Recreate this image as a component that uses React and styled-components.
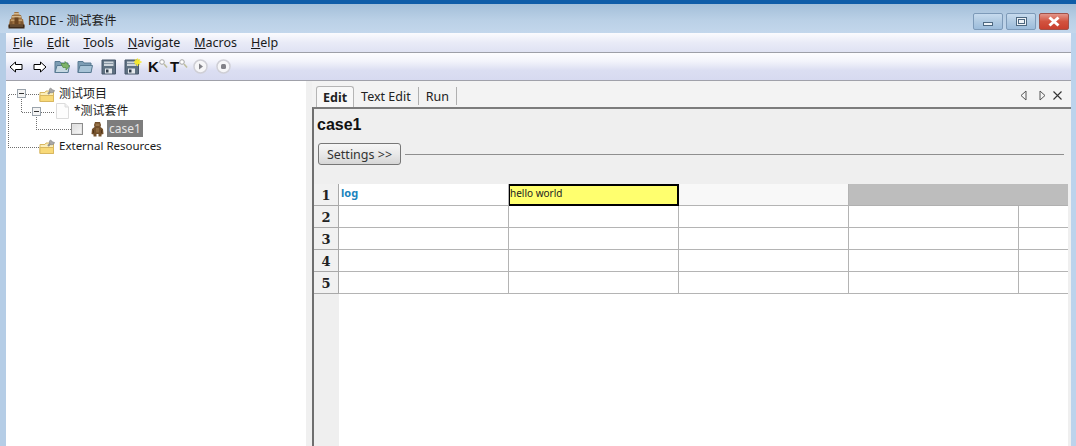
import styled, { createGlobalStyle } from "styled-components";

const uiFont = `"Noto Sans", "Noto Sans CJK SC", sans-serif`;

const GlobalStyle = createGlobalStyle`
  html, body {
    margin: 0;
    padding: 0;
    background: #b8d1ec;
  }
  * {
    box-sizing: border-box;
  }
`;

const menus = ["File", "Edit", "Tools", "Navigate", "Macros", "Help"];
const tabs = ["Edit", "Text Edit", "Run"];
const rows = [1, 2, 3, 4, 5];

function AppLogo() {
  return (
    <svg width="17" height="18" viewBox="0 0 17 18">
      <path d="M6.500 1 H10.500 L11.500 4 H13 L14 8 H15 L16.500 16 H.5 L2 8 H3 L4 4 H5.500 Z" fill="#9b7040" />
      <path d="M6 2 H11 V3.500 H6 Z M4 5 H13 V6.500 H4 Z" fill="#d6b98e" />
      <path d="M3 8.500 H14 V10 H3 Z" fill="#c49f6e" />
      <path d="M6.500 6.500 H10.500 V13 H6.500 Z" fill="#6b4521" />
      <path d="M2 10.500 H4.500 V13 H2 Z M12.500 10.500 H15 V13 H12.500 Z" fill="#7d5630" />
      <path d="M.5 13.500 H16.500 V17.500 H.5 Z" fill="#3f2a18" />
      <path d="M2 14.500 H15 V15.500 H2 Z" fill="#8a6a48" />
    </svg>
  );
}

function BearIcon() {
  return (
    <svg width="13" height="16" viewBox="0 0 13 16">
      <path d="M4 1 H9 L10 4 L9.500 6 L12 8 L12.500 13 L10.500 13.500 V15.500 H7.500 V13 H5.500 V15.500 H2.500 V13.500 L.5 13 L1 8 L3.500 6 L3 4 Z" fill="#73502b" />
      <path d="M4.500 2.500 H8.500 V5 H4.500 Z" fill="#98744a" />
      <path d="M5 7 H8 V11.500 H5 Z" fill="#8b683f" />
      <path d="M2 9 H3 V12 H2 Z M10 9 H11 V12 H10 Z" fill="#523519" />
    </svg>
  );
}

function FolderIcon() {
  return (
    <svg width="17" height="18" viewBox="0 0 17 18">
      <path d="M1 7.500 H6 L7 6 H14.500 V16.500 H1 Z" fill="#fbeebb" stroke="#d8b760" />
      <path d="M1 10.500 H14.500 V16.500 H1 Z" fill="#f8d978" stroke="#d8b760" />
      <path d="M9 9 L13 5" stroke="#8f8f8f" strokeWidth="2.200" />
      <path d="M11.500 3 A2.600 2.600 0 1 0 15.500 5.500 L13.800 5 L12.500 3.800 Z" fill="#a8a8a8" stroke="#7f7f7f" strokeWidth=".6" />
    </svg>
  );
}

function PageIcon() {
  return (
    <svg width="15" height="16" viewBox="0 0 15 16">
      <path d="M1.500 .5 H10 L13.500 4 V15.500 H1.500 Z" fill="#fdfdfd" stroke="#dcdcdc" />
      <path d="M10 .5 V4 H13.500" fill="#f0f0f0" stroke="#dcdcdc" />
    </svg>
  );
}

function ArrowIcon({ flip }) {
  return (
    <svg width="14" height="12" viewBox="0 0 14 12" style={flip ? { transform: "scaleX(-1)" } : undefined}>
      <path d="M1 6 L6.500 1 V3.500 H13 V8.500 H6.500 V11 Z" fill="#fff" stroke="#000" />
    </svg>
  );
}

function OpenFolderIcon({ withArrow }) {
  return (
    <svg width="17" height="15" viewBox="0 0 17 15">
      <path d="M1 2.500 H6 L7 4 H14 V13.500 H1 Z" fill="#7c9db4" stroke="#587a92" />
      <path d="M1 13.500 L3 6.500 H15.500 L14 13.500 Z" fill={withArrow ? "#c6d8e2" : "#a7c3d6"} stroke="#587a92" />
      {withArrow && <path d="M7 4.500 H11 V2.500 L15.500 7 L12 11 V8.500 H9 Z" fill="#7eb36a" stroke="#4f8a40" strokeWidth=".7" />}
    </svg>
  );
}

function FloppyIcon({ star }) {
  return (
    <svg width="18" height="17" viewBox="0 0 18 17">
      <path d="M1 2 H14.500 V16 H1 Z" fill="#5e7080" stroke="#46566a" />
      <path d="M3 3.500 H12.500 V8 H3 Z" fill="#cfd6dc" />
      <path d="M3 5 H12.500 V6 H3 Z" fill="#8a98a5" />
      <path d="M4 10.500 H11 V15.500 H4 Z" fill="#e4e8ec" />
      <path d="M5 11.500 H7.500 V14.500 H5 Z" fill="#2f3d4b" />
      {star && (
        <g stroke="#f6ea2a" strokeWidth="1.300">
          <path d="M13.500 .5 V8 M10 4 H17.500 M11 1.500 L16 6.500 M16 1.500 L11 6.500" />
        </g>
      )}
    </svg>
  );
}

function SearchLetter({ letter }) {
  return (
    <LetterIcon>
      {letter}
      <svg width="9" height="10" viewBox="0 0 9 10">
        <circle cx="3" cy="3" r="2.300" fill="#fff" stroke="#a5a5a5" />
        <path d="M5 5 L8 8.500" stroke="#c0c0a0" strokeWidth="1.600" />
      </svg>
    </LetterIcon>
  );
}

function RoundIcon({ stop }) {
  return (
    <svg width="15" height="15" viewBox="0 0 15 15">
      <circle cx="7.500" cy="7.500" r="6.500" fill="#f6f6f8" stroke="#cfcfd6" strokeWidth="1.500" />
      {stop ? <rect x="5" y="5" width="5" height="5" rx="1.500" fill="#818187" /> : <path d="M6 4.500 L10 7.500 L6 10.500 Z" fill="#818187" />}
    </svg>
  );
}

function WindowIcon({ kind }) {
  if (kind === "min") return <MinGlyph />;
  if (kind === "max") return <MaxGlyph />;
  return (
    <svg width="14" height="11" viewBox="0 0 14 11">
      <path d="M2.500 1.500 L11.500 9.500 M11.500 1.500 L2.500 9.500" stroke="#fff" strokeWidth="3" />
    </svg>
  );
}

function TabNavIcon({ kind }) {
  if (kind === "close") {
    return (
      <svg width="11" height="11" viewBox="0 0 11 11">
        <path d="M1.500 1.500 L9.500 9.500 M9.500 1.500 L1.500 9.500" stroke="#333" strokeWidth="1.100" />
      </svg>
    );
  }
  return (
    <svg width="7" height="11" viewBox="0 0 7 11" style={kind === "next" ? { transform: "scaleX(-1)" } : undefined}>
      <path d="M6 1 L1 5.500 L6 10 Z" fill="#f4f4f4" stroke="#555" />
    </svg>
  );
}

export default function App() {
  return (
    <>
      <GlobalStyle />
      <Screen>
        <TopStrip />
        <TitleBar>
          <TitleLeft>
            <AppLogo />
            <span>RIDE - 测试套件</span>
          </TitleLeft>
          <WindowButtons>
            <WindowButton><WindowIcon kind="min" /></WindowButton>
            <WindowButton><WindowIcon kind="max" /></WindowButton>
            <WindowButton $close><WindowIcon kind="close" /></WindowButton>
          </WindowButtons>
        </TitleBar>
        <Frame>
          <MenuBar>
            {menus.map((m) => (
              <MenuItem key={m}>
                <u>{m[0]}</u>
                {m.slice(1)}
              </MenuItem>
            ))}
          </MenuBar>
          <ToolBar>
            <ToolSlot $w={24}><ArrowIcon /></ToolSlot>
            <ToolSlot $w={21}><ArrowIcon flip /></ToolSlot>
            <ToolSlot $w={23}><OpenFolderIcon withArrow /></ToolSlot>
            <ToolSlot $w={24}><OpenFolderIcon /></ToolSlot>
            <ToolSlot $w={23}><FloppyIcon /></ToolSlot>
            <ToolSlot $w={24}><FloppyIcon star /></ToolSlot>
            <ToolSlot $w={22}><SearchLetter letter="K" /></ToolSlot>
            <ToolSlot $w={23}><SearchLetter letter="T" /></ToolSlot>
            <ToolSlot $w={23}><RoundIcon /></ToolSlot>
            <ToolSlot $w={24}><RoundIcon stop /></ToolSlot>
          </ToolBar>
          <Body>
            <TreePanel>
              <Connectors width="300" height="80" viewBox="0 0 300 80" shapeRendering="crispEdges">
                <path
                  d="M2.500 12.500 H11 M20 12.500 H33 M2.500 12.500 V65.500 H33 M15.500 17 V30.500 H26 M35 30.500 H49 M30.500 35 V47.500 H65"
                  fill="none"
                  stroke="#6f6f6f"
                  strokeDasharray="1 1"
                />
              </Connectors>
              <TreeRow $indent={11}>
                <Expander />
                <NodeIcon $gap={13}><FolderIcon /></NodeIcon>
                <NodeLabel $gap={3}>测试项目</NodeLabel>
              </TreeRow>
              <TreeRow $indent={26}>
                <Expander />
                <NodeIcon $gap={14}><PageIcon /></NodeIcon>
                <NodeLabel $gap={4}>*测试套件</NodeLabel>
              </TreeRow>
              <TreeRow $indent={65}>
                <CheckBox />
                <NodeIcon $gap={8}><BearIcon /></NodeIcon>
                <SelectedLabel>case1</SelectedLabel>
              </TreeRow>
              <TreeRow $indent={33}>
                <NodeIcon $gap={0}><FolderIcon /></NodeIcon>
                <NodeLabel $gap={3} $size={11.500}>External Resources</NodeLabel>
              </TreeRow>
            </TreePanel>
            <EditorPanel>
              <TabStrip>
                <Tabs>
                  {tabs.map((t, i) => (
                    <Tab key={t} $active={i === 0}>{t}</Tab>
                  ))}
                </Tabs>
                <TabNav>
                  <TabNavIcon kind="prev" />
                  <TabNavIcon kind="next" />
                  <TabNavIcon kind="close" />
                </TabNav>
              </TabStrip>
              <EditorPage>
                <CaseTitle>case1</CaseTitle>
                <SettingsRow>
                  <SettingsButton>Settings &gt;&gt;</SettingsButton>
                  <SettingsRule />
                </SettingsRow>
                <Grid>
                  {rows.map((r) => (
                    <Row key={r}>
                      <RowHead>{r}</RowHead>
                      <Cell $w={170} $keyword>{r === 1 && "log"}</Cell>
                      {r === 1 ? <ActiveCell>hello world</ActiveCell> : <Cell $w={170} />}
                      <Cell $w={170} $soft={r === 1} />
                      {r === 1 ? (
                        <DisabledCell />
                      ) : (
                        <>
                          <Cell $w={170} />
                          <Cell $w={49} $last />
                        </>
                      )}
                    </Row>
                  ))}
                </Grid>
                <GridRest>
                  <GutterRest />
                </GridRest>
              </EditorPage>
            </EditorPanel>
          </Body>
        </Frame>
      </Screen>
    </>
  );
}

const Screen = styled.div`
  width: 1076px;
  height: 446px;
  overflow: hidden;
  display: flex;
  flex-direction: column;
  font-family: ${uiFont};
  font-size: 12px;
  color: #111;
  background: linear-gradient(90deg, #b5cde6 0, #bcd3ec 100%);
`;

const TopStrip = styled.div`
  height: 4px;
  flex: none;
  background: #0f5da8;
`;

const TitleBar = styled.div`
  height: 29px;
  flex: none;
  display: flex;
  align-items: center;
  justify-content: space-between;
  padding: 2px 7px 0 8px;
  background: linear-gradient(180deg, #a3bfd9 0, #bad0e6 55%, #c3d7ec 100%);
`;

const TitleLeft = styled.div`
  display: flex;
  align-items: center;
  gap: 3px;
  font-size: 12.500px;
  color: #222;
`;

const WindowButtons = styled.div`
  display: flex;
  gap: 3px;
  align-self: flex-start;
  margin-top: 7px;
`;

const WindowButton = styled.div`
  width: 30px;
  height: 17px;
  display: flex;
  align-items: center;
  justify-content: center;
  border: 1px solid ${(p) => (p.$close ? "#a0524a" : "#7d9ab8")};
  border-radius: 2px;
  background: ${(p) =>
    p.$close
      ? "linear-gradient(180deg, #e3968a 0, #d2533f 50%, #c9402f 100%)"
      : "linear-gradient(180deg, #c7dbee 0, #b0cae2 50%, #9cbcdb 100%)"};
`;

const MinGlyph = styled.div`
  width: 10px;
  height: 4px;
  margin-top: 4px;
  background: #eef3f8;
  border: 1px solid #4d6880;
`;

const MaxGlyph = styled.div`
  width: 11px;
  height: 9px;
  background: #eef3f8;
  border: 1px solid #4d6880;
  display: flex;
  align-items: center;
  justify-content: center;
  &::after {
    content: "";
    width: 5px;
    height: 3px;
    border: 1px solid #4d6880;
  }
`;

const Frame = styled.div`
  flex: 1;
  min-height: 0;
  display: flex;
  flex-direction: column;
  margin: 0 5px 0 6px;
  background: #f0f0f0;
`;

const MenuBar = styled.div`
  height: 20px;
  flex: none;
  display: flex;
  align-items: center;
  gap: 14px;
  padding-left: 7px;
  background: linear-gradient(180deg, #fbfbfe 0, #e9ebf7 50%, #dfe2f3 100%);
  border-bottom: 1px solid #9d9fa8;
  font-size: 12.500px;
`;

const MenuItem = styled.span`
  color: #1a1a1a;
`;

const ToolBar = styled.div`
  height: 28px;
  flex: none;
  display: flex;
  align-items: center;
  padding-left: 3px;
  background: linear-gradient(180deg, #fdfdff 0, #f3f4fb 30%, #dbdef2 65%, #d7daf0 100%);
  border-bottom: 1px solid #a0a1aa;
`;

const ToolSlot = styled.div`
  width: ${(p) => p.$w}px;
  display: flex;
  align-items: center;
`;

const LetterIcon = styled.span`
  display: inline-flex;
  align-items: flex-start;
  font-family: "Liberation Sans", sans-serif;
  font-size: 15px;
  font-weight: 700;
  line-height: 16px;
  color: #111;
`;

const Body = styled.div`
  flex: 1;
  min-height: 0;
  display: flex;
`;

const TreePanel = styled.div`
  position: relative;
  width: 300px;
  flex: none;
  padding-top: 3px;
  background: #fff;
  border-top: 1px solid #fff;
`;

const Connectors = styled.svg`
  position: absolute;
  left: 0;
  top: 0;
  pointer-events: none;
`;

const TreeRow = styled.div`
  position: relative;
  height: 17.500px;
  display: flex;
  align-items: center;
  padding-left: ${(p) => p.$indent}px;
`;

const Expander = styled.div`
  width: 9px;
  height: 9px;
  flex: none;
  display: flex;
  align-items: center;
  justify-content: center;
  border: 1px solid #9aa3ab;
  background: #f4f4f4;
  &::after {
    content: "";
    width: 5px;
    height: 1px;
    background: #333;
  }
`;

const CheckBox = styled.div`
  width: 12px;
  height: 12px;
  flex: none;
  border: 1px solid #8c8c8c;
  background: linear-gradient(135deg, #dcdcdc, #f8f8f8);
  box-shadow: inset 0 0 0 1px #e4e4e4;
`;

const NodeIcon = styled.span`
  display: flex;
  margin-left: ${(p) => p.$gap}px;
`;

const NodeLabel = styled.span`
  margin-left: ${(p) => p.$gap}px;
  font-size: ${(p) => p.$size || 12}px;
  line-height: 16px;
  color: #1a1a1a;
`;

const SelectedLabel = styled.span`
  margin-left: 3px;
  padding: 0 2px;
  height: 17px;
  line-height: 17px;
  background: #7d7d7d;
  color: #e6e6e6;
`;

const EditorPanel = styled.div`
  flex: 1;
  min-width: 0;
  display: flex;
  flex-direction: column;
  margin-left: 6px;
  background: #f3f3f3;
`;

const TabStrip = styled.div`
  height: 26px;
  flex: none;
  display: flex;
  align-items: flex-end;
  justify-content: space-between;
  padding: 0 8px 0 4px;
`;

const Tabs = styled.div`
  display: flex;
  align-items: flex-end;
  font-size: 12.500px;
`;

const Tab = styled.div`
  height: ${(p) => (p.$active ? 21 : 18)}px;
  display: flex;
  align-items: center;
  padding: 0 ${(p) => (p.$active ? 6 : 7)}px;
  margin-bottom: ${(p) => (p.$active ? 0 : 2)}px;
  font-weight: ${(p) => (p.$active ? 700 : 400)};
  color: #222;
  background: ${(p) => (p.$active ? "#f8f8f8" : "transparent")};
  border: ${(p) => (p.$active ? "1px solid #b5b5b5" : "none")};
  border-bottom: none;
  border-radius: ${(p) => (p.$active ? "3px 3px 0 0" : 0)};
  &:not(:first-child) {
    border-right: 1px solid #b0b0b0;
  }
`;

const TabNav = styled.div`
  display: flex;
  align-items: center;
  gap: 12px;
  padding-bottom: 6px;
  svg:last-child {
    margin-left: -6px;
  }
`;

const EditorPage = styled.div`
  flex: 1;
  min-height: 0;
  display: flex;
  flex-direction: column;
  padding-right: 3px;
  background: #efefef;
  border-top: 2px solid #7c7c7c;
  border-left: 2px solid #6f6f6f;
`;

const CaseTitle = styled.div`
  height: 32px;
  flex: none;
  display: flex;
  align-items: center;
  padding: 0 0 0 3px;
  font-family: "Liberation Sans", sans-serif;
  font-size: 16px;
  font-weight: 700;
  color: #111;
`;

const SettingsRow = styled.div`
  height: 24px;
  margin-top: 1px;
  flex: none;
  display: flex;
  align-items: center;
  gap: 4px;
  padding: 0 4px 0 4px;
`;

const SettingsButton = styled.div`
  width: 83px;
  height: 22px;
  display: flex;
  align-items: center;
  justify-content: center;
  border: 1px solid #777;
  border-radius: 3px;
  background: linear-gradient(180deg, #f6f6f6 0, #e9e9e9 50%, #d6d6d6 100%);
  font-size: 12.500px;
  color: #333;
`;

const SettingsRule = styled.div`
  flex: 1;
  height: 1px;
  background: #8f8f8f;
`;

const Grid = styled.div`
  flex: none;
  margin-top: 18px;
  display: flex;
  flex-direction: column;
`;

const Row = styled.div`
  height: 22px;
  display: flex;
`;

const RowHead = styled.div`
  width: 25px;
  flex: none;
  display: flex;
  align-items: center;
  justify-content: center;
  padding-top: 2px;
  background: #f1f1f1;
  border-bottom: 1px solid #a9a9a9;
  border-right: 1px solid #a9a9a9;
  font-family: "DejaVu Serif", serif;
  font-size: 13px;
  font-weight: 700;
  color: #222;
`;

const Cell = styled.div`
  width: ${(p) => p.$w}px;
  flex: none;
  padding: 1px 0 0 2px;
  background: ${(p) => (p.$soft ? "#f8f8f8" : "#fff")};
  border-bottom: 1px solid #b4b4b4;
  border-right: ${(p) => (p.$last ? "none" : "1px solid #b4b4b4")};
  font-size: 11px;
  line-height: 16px;
  font-weight: ${(p) => (p.$keyword ? 700 : 400)};
  color: #1a83bd;
`;

const ActiveCell = styled.div`
  width: 170px;
  flex: none;
  background: #ffff6e;
  border: 2px solid #000;
  border-left-width: 1px;
  font-size: 10px;
  line-height: 15px;
  color: #222;
`;

const DisabledCell = styled.div`
  width: 219px;
  flex: none;
  background: #bdbdbd;
  border-bottom: 1px solid #b0b0b0;
`;

const GridRest = styled.div`
  flex: 1;
  background: #fff;
`;

const GutterRest = styled.div`
  width: 25px;
  height: 100%;
  background: #efefef;
`;
